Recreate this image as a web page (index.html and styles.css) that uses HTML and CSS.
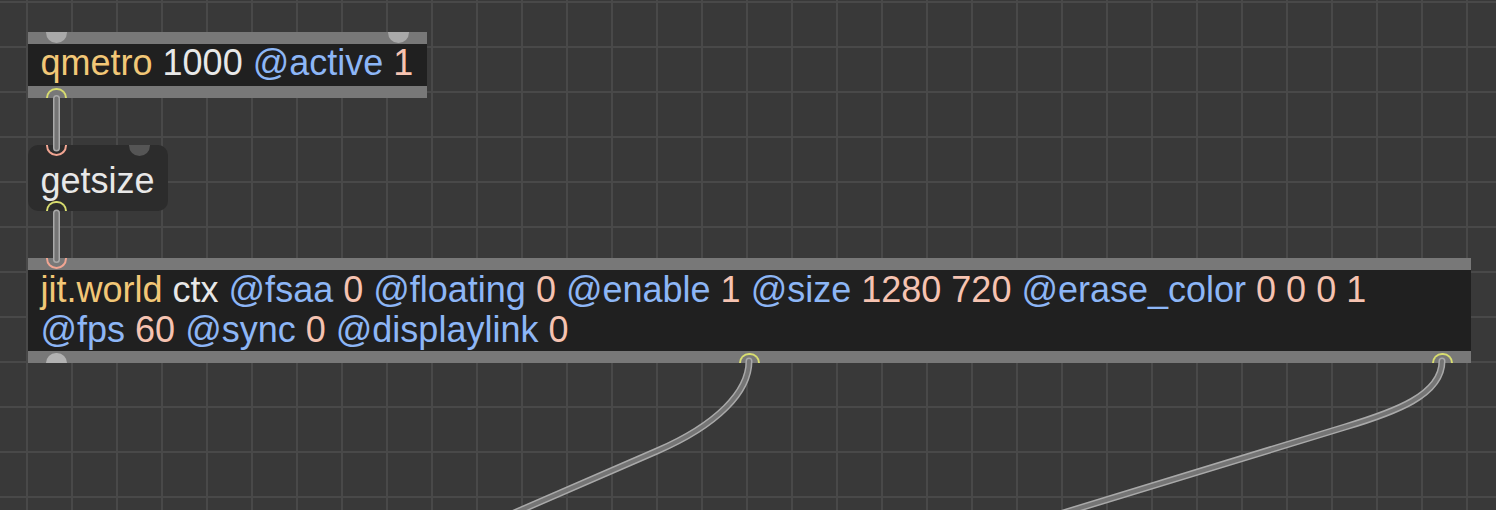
FILE: index.html
```html
<!DOCTYPE html>
<html lang="en">
<head>
    <meta charset="UTF-8">
    <title>jit.world patch</title>
    <link rel="stylesheet" href="styles.css">
</head>
<body>
    <div class="patcher">
        <!-- qmetro -->
        <div class="obj qmetro">
            <div class="bar"></div>
            <div class="text"><span class="cls">qmetro</span> <span class="arg">1000</span> <span class="attr">@active</span> <span class="num">1</span></div>
            <div class="bar"></div>
            <span class="port dome-in left"></span>
            <span class="port dome-in right"></span>
            <span class="port ring-out left"></span>
        </div>

        <!-- message box -->
        <div class="msg getsize">
            <div class="text">getsize</div>
            <span class="port ring-in left"></span>
            <span class="port dome-in dark right"></span>
            <span class="port ring-out left"></span>
        </div>

        <!-- jit.world -->
        <div class="obj world">
            <div class="bar"></div>
            <div class="text two-lines"><span class="cls">jit.world</span> <span class="arg">ctx</span> <span class="attr">@fsaa</span> <span class="num">0</span> <span class="attr">@floating</span> <span class="num">0</span> <span class="attr">@enable</span> <span class="num">1</span> <span class="attr">@size</span> <span class="num">1280 720</span> <span class="attr">@erase_color</span> <span class="num">0 0 0 1</span><br><span class="attr">@fps</span> <span class="num">60</span> <span class="attr">@sync</span> <span class="num">0</span> <span class="attr">@displaylink</span> <span class="num">0</span></div>
            <div class="bar"></div>
            <span class="port ring-in left"></span>
            <span class="port dome-out left"></span>
            <span class="port ring-out out-mid"></span>
            <span class="port ring-out out-end"></span>
        </div>

        <svg class="cords" width="1496" height="510" viewBox="0 0 1496 510">
            <g class="cord">
                <path class="edge" d="M56.5,98.5 L56.5,148"/>
                <path class="core" d="M56.5,98.5 L56.5,148"/>
            </g>
            <g class="cord">
                <path class="edge" d="M56.5,213 L56.5,259.5"/>
                <path class="core" d="M56.5,213 L56.5,259.5"/>
            </g>
            <g class="cord">
                <path class="edge" d="M749,361 C749,392 717,425 657,451 L505,517"/>
                <path class="core" d="M749,361 C749,392 717,425 657,451 L505,517"/>
            </g>
            <g class="cord">
                <path class="edge" d="M1442,361 C1442,395 1395,412 1345,427 L1060,514"/>
                <path class="core" d="M1442,361 C1442,395 1395,412 1345,427 L1060,514"/>
            </g>
        </svg>
    </div>
</body>
</html>
```

FILE: styles.css
```css
/* Patcher canvas with grid */
body {
    margin: 0;
    background: #393939;
    overflow: hidden;
    font-family: "Liberation Sans", Arial, sans-serif;
}

.patcher {
    position: relative;
    width: 1496px;
    height: 510px;
    background-color: #393939;
    background-image:
        linear-gradient(to right, #494949 2px, transparent 2px),
        linear-gradient(to bottom, #494949 2px, transparent 2px);
    background-size: 45px 45px;
    background-position: 26px 1px;
}

/* Objects */
.obj,
.msg {
    position: absolute;
    left: 28px;
    display: flex;
    flex-direction: column;
}

.qmetro {
    top: 32px;
    width: 399px;
}

.world {
    top: 258px;
    width: 1443px;
}

.bar {
    height: 12px;
    background: #787878;
}

.text {
    font-size: 36px;
    line-height: 40px;
    color: #e6e6e6;
    white-space: nowrap;
    padding-left: 12.5px;
}

.obj .text {
    height: 42px;
    background: #202020;
    line-height: 38px;
}

.obj .two-lines {
    height: 81px;
    line-height: 40px;
}

.cls { color: #f2c777; }
.arg { color: #e8e8e8; }
.attr { color: #8db6f6; }
.num { color: #f6c3b1; }

/* Message box */
.msg {
    top: 145px;
    width: 140px;
    height: 66px;
    box-sizing: border-box;
    padding-top: 17px;
    background: #2c2c2c;
    border-radius: 10px;
}

.msg .text {
    line-height: 38px;
    color: #e8e8e8;
}

/* Inlets and outlets */
.port {
    position: absolute;
    width: 21px;
    height: 10.5px;
    box-sizing: border-box;
    z-index: 2;
}

.port.left { left: 18px; }
.port.right { right: 18px; }
.port.out-mid { left: 710.5px; }
.port.out-end { left: 1403.5px; }

.dome-in {
    top: 0;
    background: #a9a9a9;
    border-radius: 0 0 11px 11px;
}

.dome-in.dark {
    background: #555555;
}

.dome-out {
    bottom: 0;
    background: #b2b2b2;
    border-radius: 11px 11px 0 0;
}

.ring-in {
    top: 0;
    border: 2.5px solid #f1a592;
    border-top: none;
    border-radius: 0 0 11px 11px;
}

.ring-out {
    bottom: 0;
    border: 2.5px solid #d9de6f;
    border-bottom: none;
    border-radius: 11px 11px 0 0;
}

/* Patch cords */
.cords {
    position: absolute;
    left: 0;
    top: 0;
    z-index: 1;
    pointer-events: none;
}

.cord path {
    fill: none;
    stroke-linecap: round;
}

.cord .edge {
    stroke: #a9a9a9;
    stroke-width: 7;
}

.cord .core {
    stroke: #757575;
    stroke-width: 4;
}
```
